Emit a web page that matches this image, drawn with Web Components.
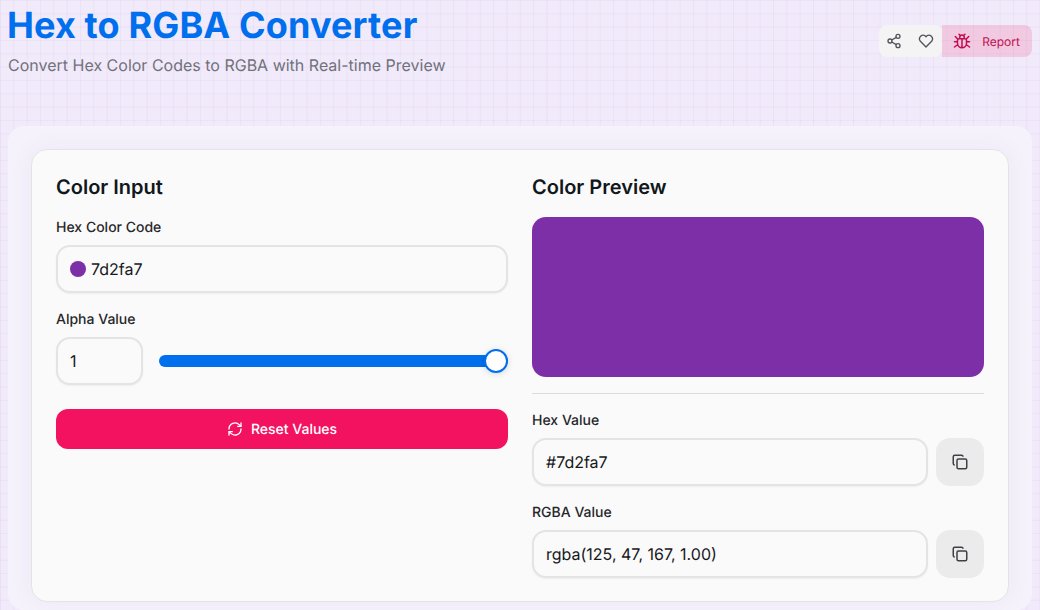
<!DOCTYPE html>
<html lang="en"><head><meta charset="utf-8"><title>Hex to RGBA Converter</title>
<style>
html,body{margin:0;height:610px;overflow:hidden}
body{font-family:Inter,"Liberation Sans",sans-serif;text-rendering:geometricPrecision;color:#11181c;background-color:#f1eafa;
background-image:linear-gradient(rgba(120,90,170,.06) 1px,transparent 1px),linear-gradient(90deg,rgba(120,90,170,.06) 1px,transparent 1px);background-size:13.33px 13.33px}
</style></head><body>
<hex-app></hex-app>
<template id="t-app"><style>
:host{display:block;padding:0 8px}
.card{background:#fafafa;border-radius:16px;border:1px solid #e4e4e7;box-shadow:0 0 24px rgba(60,40,80,.05);padding:23px 24px;display:grid;grid-template-columns:1fr 1fr;gap:24px;height:405px;box-sizing:content-box}
.panel{margin-top:17px;background:#f6f2fc;border-radius:16px;padding:23px 23px 0;height:484px;box-sizing:border-box}
.col{display:flex;flex-direction:column;min-width:0}
h2{font-size:20px;font-weight:600;line-height:28px;margin:0 0 16px}
.divider{height:1px;background:#dcdcdf;margin:16px 0}
.alpha{display:flex;gap:16px;align-items:center}
.alpha hex-field{width:87px;flex:none}
.mt{margin-top:16px}
.preview{height:160px;border-radius:14px;background:#7d2fa7}
hex-slider{flex:1}
.copyrow{display:flex;gap:8px}
.copyrow hex-field{flex:1}
.reset{margin-top:24px;height:40px;border:0;border-radius:12px;background:#f31260;color:#fff;font:500 14px Inter,sans-serif;text-rendering:geometricPrecision;display:flex;align-items:center;justify-content:center;gap:8px}
</style>
<app-header></app-header>
<div class="panel"><div class="card">
<div class="col">
<h2>Color Input</h2>
<field-label>Hex Color Code</field-label>
<hex-field value="7d2fa7" swatch></hex-field>
<field-label class="mt">Alpha Value</field-label>
<div class="alpha"><hex-field value="1"></hex-field><hex-slider></hex-slider></div>
<button class="reset"><svg width="16" height="16" viewBox="0 0 24 24" fill="none" stroke="#fff" stroke-width="2" stroke-linecap="round" stroke-linejoin="round"><path d="M3 12a9 9 0 0 1 15.5-6.2L21 8"/><path d="M21 3v5h-5"/><path d="M21 12a9 9 0 0 1-15.5 6.2L3 16"/><path d="M8 16H3v5"/></svg>Reset Values</button>
</div>
<div class="col">
<h2>Color Preview</h2>
<div class="preview"></div>
<div class="divider"></div>
<field-label>Hex Value</field-label>
<div class="copyrow"><hex-field value="#7d2fa7"></hex-field><copy-button></copy-button></div>
<field-label class="mt">RGBA Value</field-label>
<div class="copyrow"><hex-field value="rgba(125, 47, 167, 1.00)"></hex-field><copy-button></copy-button></div>
</div>
</div></div>
</template>
<template id="t-header"><style>
:host{display:flex;justify-content:space-between;align-items:flex-start;height:109px}
h1{font-size:36px;font-weight:700;line-height:40px;color:#006fee;margin:5px 0 0 -1px;letter-spacing:.14px}
p{font-size:16px;line-height:24px;margin:8px 0 0;color:#71717a}
.btns{display:flex;margin-top:25px}
.b{height:32px;display:flex;align-items:center;justify-content:center;box-sizing:border-box}
.s{width:32px;background:#f4f4f5;border-radius:8px 0 0 8px;padding-right:2px}
.h{width:31px;background:#f4f4f5;border-radius:0 8px 8px 0;padding-right:1px}
.r{width:90px;background:rgba(243,18,96,.15);border-radius:0 8px 8px 0;color:#c20e4d;font-size:12px;gap:11px;padding-right:1px}
</style>
<div><h1>Hex to RGBA Converter</h1><p>Convert Hex Color Codes to RGBA with Real-time Preview</p></div>
<div class="btns">
<div class="b s"><svg width="16" height="16" viewBox="0 0 24 24" fill="none" stroke="#52525b" stroke-width="2"><circle cx="18" cy="5" r="3"/><circle cx="6" cy="12" r="3"/><circle cx="18" cy="19" r="3"/><path d="M8.6 13.500l6.800 4M15.400 6.500l-6.800 4"/></svg></div>
<div class="b h"><svg width="16" height="16" viewBox="0 0 24 24" fill="none" stroke="#52525b" stroke-width="2" stroke-linejoin="round"><path d="M12 21l-8.800-9A5.500 5.500 0 0 1 11 4.500l1 1.200 1-1.200A5.500 5.500 0 0 1 20.800 12z"/></svg></div>
<div class="b r"><svg width="18" height="18" viewBox="0 0 24 24" fill="none" stroke="#c20e4d" stroke-width="2" stroke-linecap="round"><path d="M8 9h8a2 2 0 0 1 2 2v4a6 6 0 0 1-12 0v-4a2 2 0 0 1 2-2zM9 9V7a3 3 0 0 1 6 0v2M8 3l2 2M16 3l-2 2M12 9v12M6 13H2M22 13h-4M6 17l-4 3M18 17l4 3M6 9L3 6M18 9l3-3"/></svg>Report</div>
</div>
</template>
<template id="t-label"><style>:host{display:block;font-size:14px;font-weight:500;line-height:20px;padding-top:1px;margin-bottom:7px;color:#27272a}</style><slot></slot></template>
<template id="t-field"><style>
:host{display:block}
.f{height:48px;box-sizing:border-box;border:2px solid #e4e4e7;border-radius:14px;background:#fafafa;box-shadow:0 1px 2px rgba(0,0,0,.05);display:flex;align-items:center;padding:0 12px;gap:5px;font-size:16px;color:#18181b}
.sw{width:16px;height:16px;border-radius:50%;background:#7d2fa7}
</style><div class="f"><span class="sw" id="sw"></span><span id="v"></span></div></template>
<template id="t-slider"><style>
:host{display:block;height:24px;position:relative}
.tr{position:absolute;left:0;right:0;top:6px;height:12px;border-radius:6px;background:#006fee}
.th{position:absolute;right:0;top:0;width:24px;height:24px;box-sizing:border-box;border-radius:50%;background:#fff;border:2px solid #006fee;box-shadow:0 1px 6px rgba(0,0,0,.15)}
</style><div class="tr"></div><div class="th"></div></template>
<template id="t-copy"><style>
:host{display:flex;width:48px;height:48px;flex:none;border-radius:14px;background:#ebebec;align-items:center;justify-content:center}
</style><svg width="18" height="18" viewBox="0 0 24 24" fill="none" stroke="#3f3f46" stroke-width="2" stroke-linejoin="round"><rect x="8" y="8" width="13" height="13" rx="2"/><path d="M5 16c-1 0-2-1-2-2V5c0-1 1-2 2-2h9c1 0 2 1 2 2"/></svg></template>
<script>
function def(name,tpl,init){customElements.define(name,class extends HTMLElement{constructor(){super();this.attachShadow({mode:'open'}).appendChild(document.getElementById(tpl).content.cloneNode(true));}connectedCallback(){if(init)init(this)}})}
def('app-header','t-header');def('field-label','t-label');def('hex-slider','t-slider');def('copy-button','t-copy');
def('hex-field','t-field',el=>{el.shadowRoot.getElementById('v').textContent=el.getAttribute('value');if(!el.hasAttribute('swatch'))el.shadowRoot.getElementById('sw').remove();});
def('hex-app','t-app');
</script>
</body></html>
